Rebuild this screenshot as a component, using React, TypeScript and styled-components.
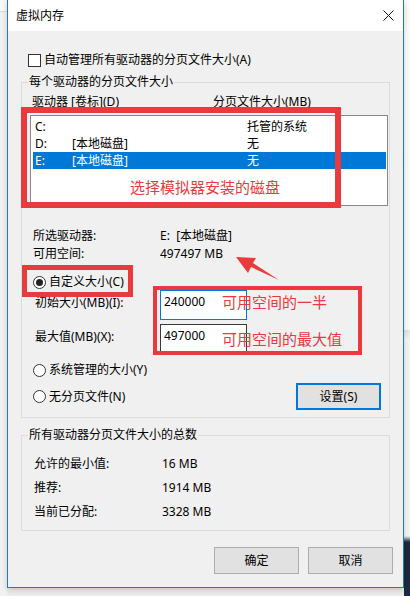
import React from "react";
import styled, { createGlobalStyle } from "styled-components";

const GlobalStyle = createGlobalStyle`
  html, body { margin: 0; padding: 0; }
  body {
    background: #ededed;
    font-family: "Noto Sans", "Noto Sans CJK SC", sans-serif;
    font-size: 12px;
    color: #000;
  }
  * { box-sizing: border-box; }
`;

const Page = styled.div`
  width: 410px;
  height: 596px;
  display: flex;
  overflow: hidden;
  background: #ededed;
`;

const LeftStrip = styled.div`
  width: 7px;
  flex: none;
  background: linear-gradient(#f9f9f9 0, #f9f9f9 11px, #dadada 11px, #dadada 12px, #f2f2f2 12px);
`;

const RightStrip = styled.div`
  flex: 1;
  background: linear-gradient(
    to bottom,
    #fbfbfb 0,
    #fbfbfb 330px,
    #e4e4e4 330px,
    #f5f5f5 340px,
    #f5f5f5 536px,
    #1b2942 542px
  );
`;

const Dialog = styled.div`
  position: relative;
  width: 397px;
  height: 588px;
  flex: none;
  border: 1px solid #1c7bd0;
  border-top: none;
  background: #f0f0f0;
  display: flex;
  flex-direction: column;
  box-shadow: 0 2px 6px rgba(0, 0, 0, 0.18);
`;

const TitleBar = styled.div`
  height: 31px;
  background: #fff;
  display: flex;
  align-items: center;
  padding-left: 8px;
`;

const Title = styled.div`
  flex: 1;
  line-height: 16px;
  font-size: 12px;
`;

const CloseBox = styled.div`
  width: 30px;
  height: 31px;
  display: flex;
  align-items: center;
  justify-content: center;
`;

const Body = styled.div`
  flex: 1;
  padding: 0 10px;
  display: flex;
  flex-direction: column;
`;

const CheckRow = styled.div`
  display: flex;
  align-items: center;
  height: 16px;
  line-height: 16px;
  margin: 21px 0 0 10px;
`;

const CheckBox = styled.span`
  width: 13px;
  height: 13px;
  border: 1px solid #333;
  background: #fff;
  margin-right: 3px;
  flex: none;
`;

const Group = styled.fieldset<{ $mt: number }>`
  margin: ${(p) => p.$mt}px 3px 0;
  padding: 0;
  border: 1px solid #dcdcdc;
  min-width: 0;
`;

const Legend = styled.legend`
  margin-left: 6px;
  padding: 0 1px;
  line-height: 16px;
  font-size: 12px;
`;

const ColumnHeader = styled.div`
  display: grid;
  grid-template-columns: 181px auto;
  margin: 4px 0 0 10px;
  line-height: 16px;
`;

const ListBox = styled.div`
  margin: 5px 1px 0 8px;
  height: 91px;
  border: 1px solid #828790;
  background: #fff;
  padding: 2px 1px 2px 2px;
`;

const ListRow = styled.div<{ $selected?: boolean }>`
  display: grid;
  grid-template-columns: 37px 175px 1fr;
  height: 17px;
  line-height: 17px;
  padding-left: 2px;
  background: ${(p) => (p.$selected ? "#0078d7" : "transparent")};
  color: ${(p) => (p.$selected ? "#fff" : "#000")};
`;

const InfoGrid = styled.div<{ $cols: string; $lh: number; $m: string }>`
  display: grid;
  grid-template-columns: ${(p) => p.$cols};
  line-height: ${(p) => p.$lh}px;
  margin: ${(p) => p.$m};
`;

const RadioRow = styled.div<{ $mt: number }>`
  display: flex;
  align-items: center;
  line-height: 16px;
  height: 16px;
  margin: ${(p) => p.$mt}px 0 0 11px;
`;

const RadioCircle = styled.span<{ $checked?: boolean }>`
  width: 13px;
  height: 13px;
  border-radius: 50%;
  border: 1px solid #333;
  background: #fff;
  margin-right: 3px;
  flex: none;
  display: flex;
  align-items: center;
  justify-content: center;
  &::after {
    content: "";
    width: 7px;
    height: 7px;
    border-radius: 50%;
    background: ${(p) => (p.$checked ? "#222" : "transparent")};
  }
`;

const SizeRow = styled.div<{ $mt: number }>`
  display: grid;
  grid-template-columns: 125px 87px;
  margin: ${(p) => p.$mt}px 0 0 13px;
`;

const SizeLabel = styled.div`
  padding-top: 5px;
  line-height: 16px;
`;

const SizeInput = styled.div<{ $focused?: boolean }>`
  height: 30px;
  border: 1px solid ${(p) => (p.$focused ? "#0078d7" : "#3a3a3a")};
  background: #fff;
  padding: 3px 0 0 3px;
  line-height: 16px;
  font-size: 12px;
`;

const BottomRow = styled.div`
  display: flex;
  align-items: center;
  justify-content: space-between;
  height: 27px;
  margin: 5px 8px 7px 11px;
`;

const RadioLabelWrap = styled.div`
  display: flex;
  align-items: center;
  line-height: 16px;
`;

const Button = styled.div<{ $default?: boolean }>`
  width: 85px;
  height: 27px;
  display: flex;
  align-items: center;
  justify-content: center;
  background: #e1e1e1;
  border: ${(p) => (p.$default ? "2px solid #0078d7" : "1px solid #adadad")};
  font-size: 12px;
  line-height: 16px;
`;

const ButtonRow = styled.div`
  display: flex;
  justify-content: flex-end;
  gap: 9px;
  margin-top: 16px;
`;

const MarkBox = styled.div<{ $x: number; $y: number; $w: number; $h: number; $t: number }>`
  position: absolute;
  left: ${(p) => p.$x}px;
  top: ${(p) => p.$y}px;
  width: ${(p) => p.$w}px;
  height: ${(p) => p.$h}px;
  border: ${(p) => p.$t}px solid #ea3a3e;
  pointer-events: none;
`;

const MarkText = styled.div<{ $x: number; $y: number }>`
  position: absolute;
  left: ${(p) => p.$x}px;
  top: ${(p) => p.$y}px;
  color: #e8393d;
  font-family: "Noto Sans CJK SC", sans-serif;
  font-size: 15px;
  line-height: 20px;
  white-space: nowrap;
`;

const ArrowSvg = styled.svg`
  position: absolute;
  left: 222px;
  top: 250px;
  width: 60px;
  height: 35px;
`;

export default function App() {
  return (
    <>
      <GlobalStyle />
      <Page>
        <LeftStrip />
        <Dialog>
          <TitleBar>
            <Title>虚拟内存</Title>
            <CloseBox>
              <svg width="11" height="11" viewBox="0 0 11 11">
                <path d="M0.5 0.5 L10.5 10.5 M10.5 0.5 L0.5 10.5" stroke="#111" strokeWidth="1" fill="none" />
              </svg>
            </CloseBox>
          </TitleBar>
          <Body>
            <CheckRow>
              <CheckBox />
              自动管理所有驱动器的分页文件大小(A)
            </CheckRow>

            <Group $mt={6}>
              <Legend>每个驱动器的分页文件大小</Legend>
              <ColumnHeader>
                <span>驱动器 [卷标](D)</span>
                <span>分页文件大小(MB)</span>
              </ColumnHeader>
              <ListBox>
                <ListRow>
                  <span>C:</span>
                  <span></span>
                  <span>托管的系统</span>
                </ListRow>
                <ListRow>
                  <span>D:</span>
                  <span>[本地磁盘]</span>
                  <span>无</span>
                </ListRow>
                <ListRow $selected>
                  <span>E:</span>
                  <span>[本地磁盘]</span>
                  <span>无</span>
                </ListRow>
              </ListBox>

              <InfoGrid $cols="127px auto" $lh={18} $m="21px 0 0 11px">
                <span>所选驱动器:</span>
                <span>E:&nbsp;&nbsp;[本地磁盘]</span>
                <span>可用空间:</span>
                <span>497497 MB</span>
              </InfoGrid>

              <RadioRow $mt={11}>
                <RadioCircle $checked />
                自定义大小(C)
              </RadioRow>

              <SizeRow $mt={0}>
                <SizeLabel>初始大小(MB)(I):</SizeLabel>
                <SizeInput $focused>240000</SizeInput>
              </SizeRow>
              <SizeRow $mt={4}>
                <SizeLabel>最大值(MB)(X):</SizeLabel>
                <SizeInput>497000</SizeInput>
              </SizeRow>

              <RadioRow $mt={8}>
                <RadioCircle />
                系统管理的大小(Y)
              </RadioRow>
              <BottomRow>
                <RadioLabelWrap>
                  <RadioCircle />
                  无分页文件(N)
                </RadioLabelWrap>
                <Button $default>设置(S)</Button>
              </BottomRow>
            </Group>

            <Group $mt={9}>
              <Legend>所有驱动器分页文件大小的总数</Legend>
              <InfoGrid $cols="128px auto" $lh={24} $m="9px 0 6px 12px">
                <span>允许的最小值:</span>
                <span>16 MB</span>
                <span>推荐:</span>
                <span>1914 MB</span>
                <span>当前已分配:</span>
                <span>3328 MB</span>
              </InfoGrid>
            </Group>

            <ButtonRow>
              <Button>确定</Button>
              <Button>取消</Button>
            </ButtonRow>
          </Body>

          <MarkBox $x={13} $y={107} $w={320} $h={101} $t={6} />
          <MarkText $x={122} $y={177}>选择模拟器安装的磁盘</MarkText>
          <MarkBox $x={14} $y={265} $w={111} $h={32} $t={5} />
          <MarkBox $x={145} $y={286} $w={209} $h={69} $t={4} />
          <MarkText $x={214} $y={292}>可用空间的一半</MarkText>
          <MarkText $x={214} $y={329}>可用空间的最大值</MarkText>
          <ArrowSvg viewBox="230 250 60 35">
            <polygon
              points="236,257 256,258 253,263 279,280 251,267 248,273"
              fill="#ea3a3e"
            />
          </ArrowSvg>
        </Dialog>
        <RightStrip />
      </Page>
    </>
  );
}
